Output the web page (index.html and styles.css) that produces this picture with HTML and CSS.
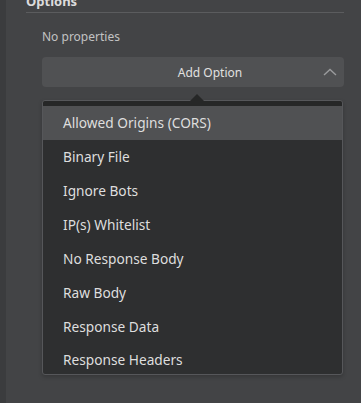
FILE: index.html
```html
<!DOCTYPE html>
<html lang="en">
<head>
    <meta charset="UTF-8">
    <title>Options</title>
    <link rel="stylesheet" href="styles.css">
</head>
<body>
    <div class="app">
        <div class="rail"></div>
        <div class="panel">
            <h3 class="section-title">Options</h3>
            <div class="section-body">
                <p class="empty">No properties</p>
                <button class="add-btn">
                    <span>Add Option</span>
                    <svg class="chevron" width="14" height="8" viewBox="0 0 14 8">
                        <path d="M1 7 L7 1.5 L13 7" fill="none" stroke="#9a9b9d" stroke-width="1.4"/>
                    </svg>
                </button>
                <div class="menu">
                    <div class="menu-caret"></div>
                    <ul class="menu-list">
                        <li class="active">Allowed Origins (CORS)</li>
                        <li>Binary File</li>
                        <li>Ignore Bots</li>
                        <li>IP(s) Whitelist</li>
                        <li>No Response Body</li>
                        <li>Raw Body</li>
                        <li>Response Data</li>
                        <li>Response Headers</li>
                    </ul>
                </div>
            </div>
        </div>
    </div>
</body>
</html>
```

FILE: styles.css
```css
* {
    margin: 0;
    padding: 0;
    box-sizing: border-box;
    font-family: "Noto Sans", "Open Sans", sans-serif;
}
html, body {
    height: 100%;
    overflow: hidden;
}
body {
    background-color: #434446;
    color: #dcdcdc;
}
.app {
    display: flex;
    height: 100%;
}
.rail {
    width: 6px;
    background-color: #3b3c3e;
}
.panel {
    flex: 1;
    padding: 0 17px 0 20px;
}
.section-title {
    margin-top: -9px;
    font-size: 13px;
    font-weight: bold;
    color: #dcdcdc;
    line-height: 20px;
    padding-bottom: 1px;
    border-bottom: 1px solid #5b5c5e;
}
.section-body {
    padding-left: 16px;
}
.empty {
    margin-top: 15px;
    font-size: 12px;
    line-height: 18px;
    color: #c2c2c2;
}
.add-btn {
    position: relative;
    margin-top: 11px;
    width: 100%;
    height: 30px;
    border: none;
    border-radius: 4px;
    background-color: #505153;
    color: #e0e0e0;
    font-size: 12px;
    display: flex;
    align-items: center;
    justify-content: center;
    padding-left: 34px;
}
.chevron {
    position: absolute;
    right: 7px;
    top: 11px;
}
.menu {
    position: relative;
    margin-top: 13px;
    margin-right: 1px;
    background-color: #2e2f30;
    border: 1px solid #56575a;
    border-radius: 3px;
    padding-top: 5px;
    box-shadow: 0 2px 4px rgba(0, 0, 0, 0.2);
}
.menu::before {
    content: "";
    position: absolute;
    left: 0;
    right: 0;
    top: 0;
    height: 5px;
    background-color: #262727;
    border-radius: 3px 3px 0 0;
}
.menu-caret {
    position: absolute;
    top: -7px;
    left: 147px;
    width: 0;
    height: 0;
    border-left: 7px solid transparent;
    border-right: 7px solid transparent;
    border-bottom: 7px solid #262727;
}
.menu-list {
    list-style: none;
}
.menu-list li {
    height: 34px;
    line-height: 34px;
    padding-left: 20px;
    font-size: 13.7px;
    color: #dedede;
}
.menu-list li:last-child {
    height: 30px;
    line-height: 31px;
}
.menu-list li.active {
    background-color: #505153;
}
```
